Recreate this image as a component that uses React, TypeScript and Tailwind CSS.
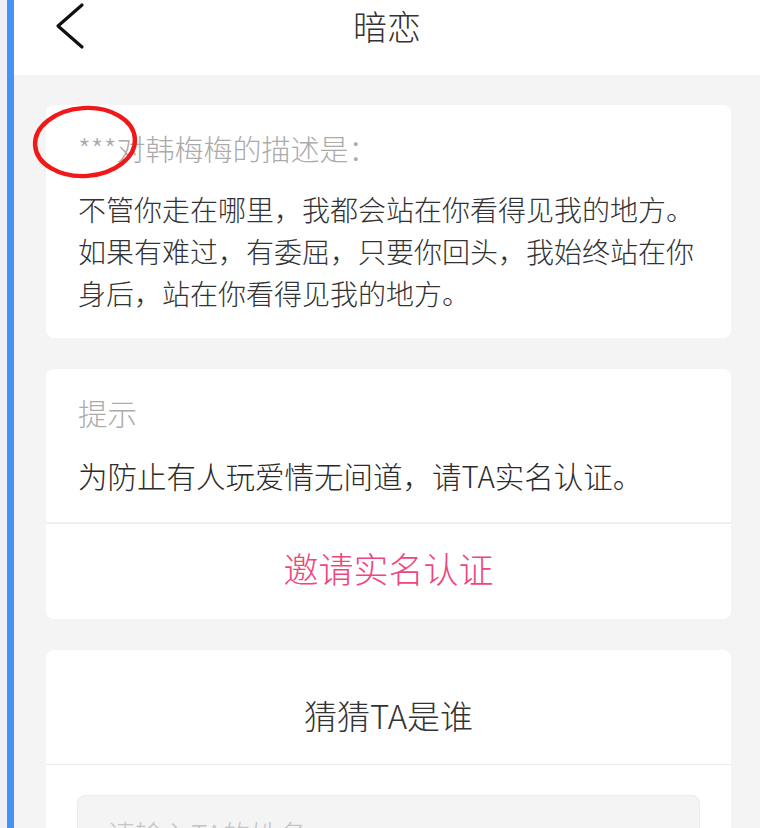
import React from "react";

const font = { fontFamily: '"Noto Sans CJK SC", "Noto Sans", sans-serif' };

export default function App() {
  return (
    <div
      className="relative flex w-[760px] h-[828px] overflow-hidden bg-[#f4f4f4] font-light"
      style={font}
    >
      {/* left edge strips */}
      <div className="w-[7px] shrink-0 bg-[#eef0f5]" />
      <div className="w-[7px] shrink-0 bg-[#4493f8]" />

      {/* main column */}
      <div className="flex flex-1 flex-col">
        {/* header */}
        <div className="h-[75px] shrink-0 bg-white">
          <div className="grid h-[52px] grid-cols-[1fr_auto_1fr] items-center">
            <div className="pl-[40px]">
              <svg width="32" height="50" viewBox="0 0 32 50" className="block">
                <polyline
                  points="28,4 4,25 28,46"
                  fill="none"
                  stroke="#111"
                  strokeWidth="3.2"
                  strokeLinecap="round"
                  strokeLinejoin="round"
                />
              </svg>
            </div>
            <div className="text-[34px] leading-[52px] text-[#333]">暗恋</div>
            <div />
          </div>
        </div>

        {/* card 1 */}
        <div className="ml-[32px] mt-[30px] w-[685px] rounded-lg bg-white px-[32px] pt-[23px] pb-[24px]">
          <div className="text-[29px] leading-[40px] text-[#ababab]">
            ***对韩梅梅的描述是：
          </div>
          <p className="mt-[20px] text-[28px] leading-[42px] text-[#333]">
            不管你走在哪里，我都会站在你看得见我的地方。如果有难过，有委屈，只要你回头，我始终站在你身后，站在你看得见我的地方。
          </p>
        </div>

        {/* card 2 */}
        <div className="ml-[32px] mt-[31px] w-[685px] rounded-lg bg-white">
          <div className="px-[32px] pt-[23px] pb-[27px]">
            <div className="text-[29.5px] leading-[40px] text-[#ababab]">提示</div>
            <div className="mt-[23px] text-[29.5px] leading-[40px] text-[#2b2b2b]">
              为防止有人玩爱情无间道，请TA实名认证。
            </div>
          </div>
          <div className="h-[2px] bg-[#efefef]" />
          <div className="pt-[22px] pb-[29px] text-center text-[35px] leading-[44px] text-[#f0457d]">
            邀请实名认证
          </div>
        </div>

        {/* card 3 */}
        <div className="ml-[32px] mt-[31px] w-[685px] rounded-t-lg bg-white">
          <div className="pt-[43px] pb-[27px] text-center text-[33px] leading-[44px] text-[#333]">
            猜猜TA是谁
          </div>
          <div className="h-px bg-[#ececec]" />
          <div className="px-[31px] pt-[30px]">
            <div className="rounded-lg border border-[#ececec] bg-[#f4f4f4] px-[29px] pt-[18px] pb-[18px] text-[28px] leading-[40px] text-[#c4c4c4]">
              请输入TA的姓名
            </div>
          </div>
        </div>
      </div>

      {/* red annotation ellipse */}
      <svg
        className="pointer-events-none absolute left-[30px] top-[103px]"
        width="112"
        height="78"
        viewBox="0 0 112 78"
      >
        <ellipse
          cx="55"
          cy="39"
          rx="50"
          ry="34"
          fill="none"
          stroke="#f01818"
          strokeWidth="4.4"
          transform="rotate(-4 55 39)"
        />
      </svg>
    </div>
  );
}
